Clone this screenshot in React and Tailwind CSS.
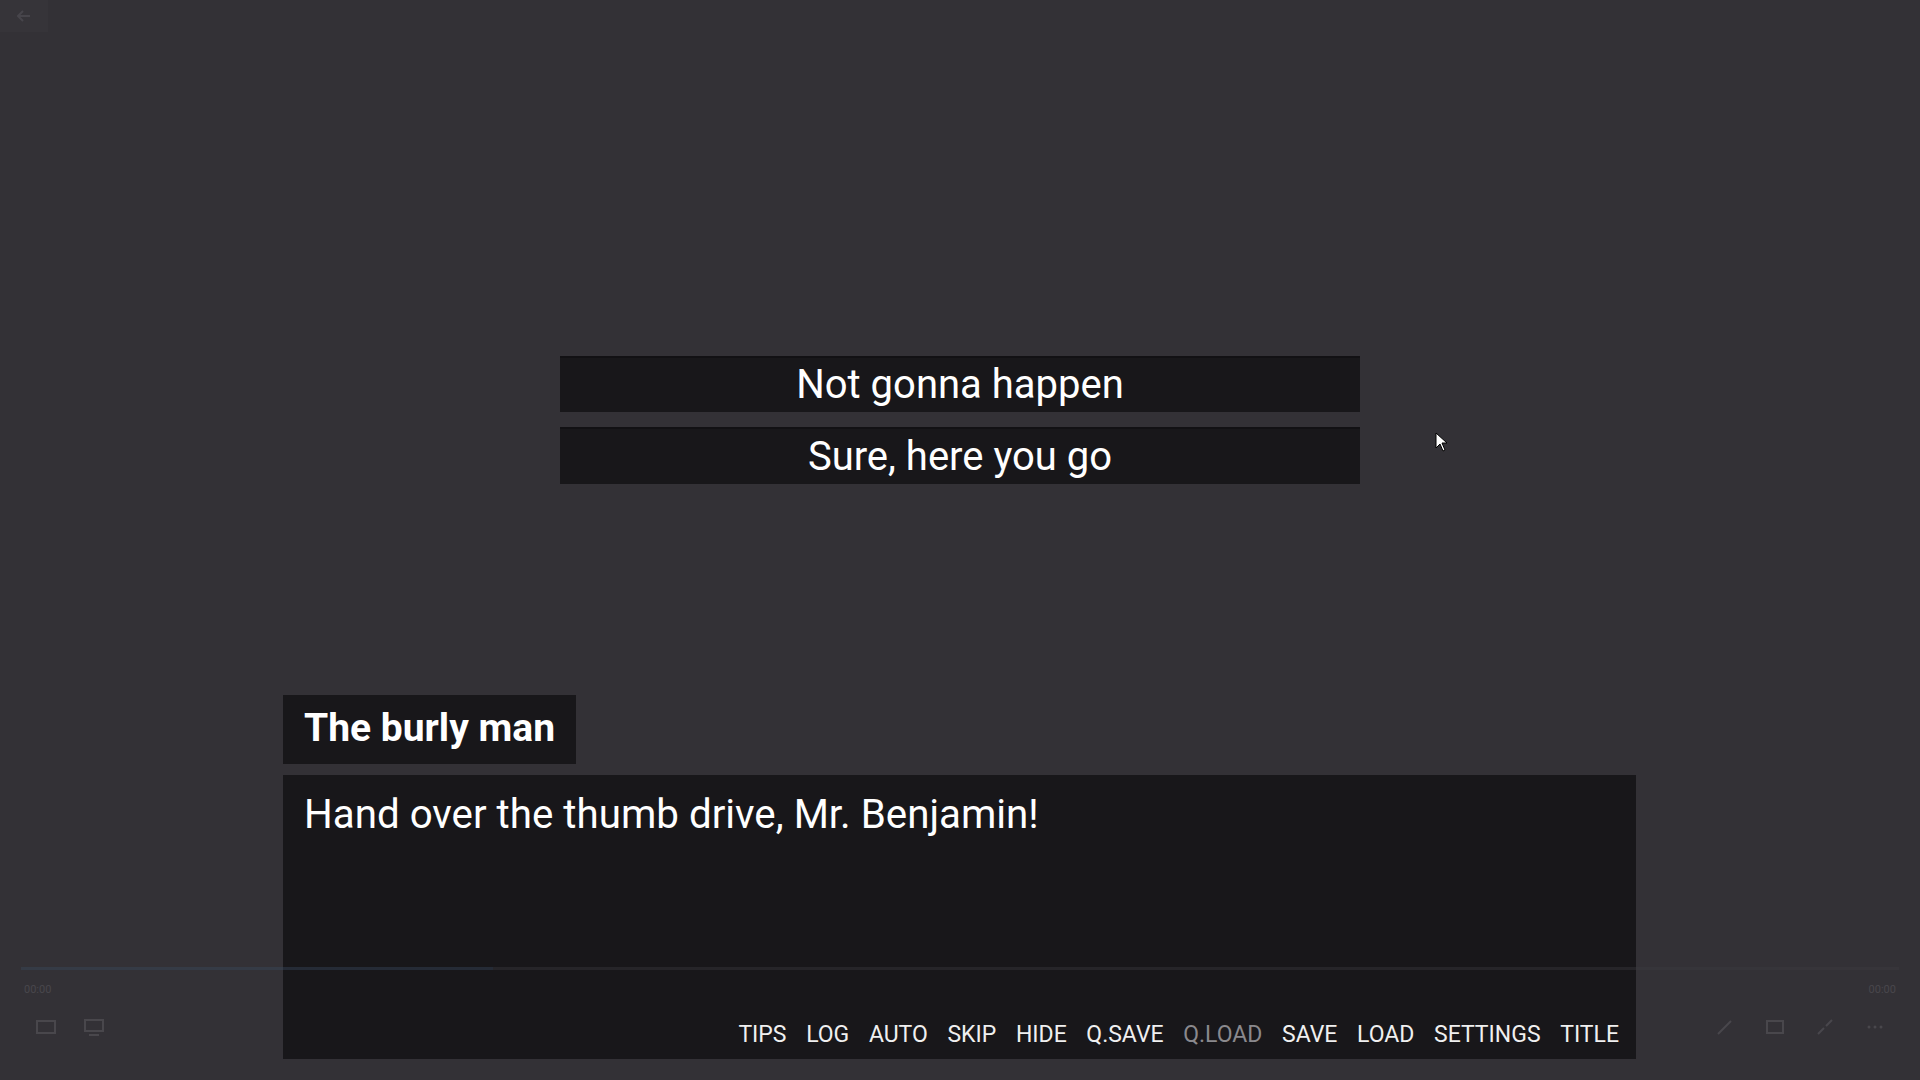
import React from "react";

const menu = ["TIPS", "LOG", "AUTO", "SKIP", "HIDE", "Q.SAVE", "Q.LOAD", "SAVE", "LOAD", "SETTINGS", "TITLE"];

export default function App() {
  return (
    <div
      className="relative w-[1920px] h-[1080px] overflow-hidden bg-[#333136] text-white"
      style={{ fontFamily: "Roboto, 'Liberation Sans', sans-serif" }}
    >
      {/* top-left back button (faint) */}
      <div className="absolute left-0 top-0 w-[48px] h-[32px] bg-[#363439] flex items-center justify-center">
        <svg width="14" height="12" viewBox="0 0 14 12" fill="none" stroke="#47454b" strokeWidth="2">
          <path d="M13 6H2M6 1L1 6l5 5" />
        </svg>
      </div>

      {/* choices */}
      <div className="mx-auto w-[800px] pt-[356px] flex flex-col gap-[15px]">
        <div className="h-[56px] bg-[#18171a] border-t-2 border-[#121114] flex items-center justify-center text-[40px] leading-none">
          Not gonna happen
        </div>
        <div className="h-[57px] bg-[#18171a] border-t-2 border-[#121114] flex items-center justify-center text-[40px] leading-none">
          Sure, here you go
        </div>
      </div>

      {/* name box */}
      <div className="ml-[283px] mt-[211px] w-[293px] h-[69px] bg-[#18171a] flex items-center pl-[21px] pb-[2px]">
        <span className="text-[39px] font-bold leading-none">The burly man</span>
      </div>

      {/* dialogue box */}
      <div className="ml-[283px] mt-[11px] w-[1353px] h-[284px] bg-[#18171a] flex flex-col justify-between">
        <div className="pl-[21px] pt-[14px] text-[40.3px] leading-[52px]">
          Hand over the thumb drive, Mr. Benjamin!
        </div>
        <div className="flex justify-end gap-[19.6px] pr-[17px] pb-[10px] text-[23px] leading-[28px]">
          {menu.map((m) => (
            <span key={m} className={m === "Q.LOAD" ? "text-[#8a898d]" : "text-[#f0f0f0]"}>
              {m}
            </span>
          ))}
        </div>
      </div>

      {/* faint video overlay controls */}
      <div className="absolute left-0 right-0 bottom-0 h-[114px] pointer-events-none opacity-40 flex flex-col px-[21px] pt-[1px]">
        <div className="relative h-[3px] bg-[#3d3b41]">
          <div className="h-full w-[472px] bg-[#3a4a60]" />
        </div>
        <div className="flex justify-between px-[3px] pt-[14px] text-[11px] leading-[12px] text-[#6a686e]">
          <span>00:00</span>
          <span>00:00</span>
        </div>
        <div className="flex justify-between px-[14px] pt-[22px] text-[#6a686e]">
          <div className="flex gap-[26px]">
            <svg width="22" height="18" viewBox="0 0 22 18" fill="none" stroke="currentColor" strokeWidth="2">
              <rect x="2" y="3" width="18" height="12" />
            </svg>
            <svg width="22" height="18" viewBox="0 0 22 18" fill="none" stroke="currentColor" strokeWidth="2">
              <rect x="2" y="2" width="18" height="11" />
              <path d="M6 17h10" />
            </svg>
          </div>
          <div className="flex gap-[30px]">
            <svg width="20" height="18" viewBox="0 0 20 18" fill="none" stroke="currentColor" strokeWidth="2">
              <path d="M3 16L16 3" />
            </svg>
            <svg width="20" height="18" viewBox="0 0 20 18" fill="none" stroke="currentColor" strokeWidth="2">
              <rect x="2" y="3" width="16" height="12" />
            </svg>
            <svg width="20" height="18" viewBox="0 0 20 18" fill="none" stroke="currentColor" strokeWidth="2">
              <path d="M3 16l6-6M11 8l6-6" />
            </svg>
            <svg width="20" height="18" viewBox="0 0 20 18" fill="currentColor">
              <circle cx="4" cy="9" r="1.5" />
              <circle cx="10" cy="9" r="1.5" />
              <circle cx="16" cy="9" r="1.5" />
            </svg>
          </div>
        </div>
      </div>

      {/* mouse cursor */}
      <svg className="absolute left-[1435px] top-[432px]" width="13" height="20" viewBox="0 0 13 20">
        <path d="M1 1v15l4-4 3 7 2-1-3-7h5z" fill="#fff" stroke="#000" strokeWidth="1" />
      </svg>
    </div>
  );
}
